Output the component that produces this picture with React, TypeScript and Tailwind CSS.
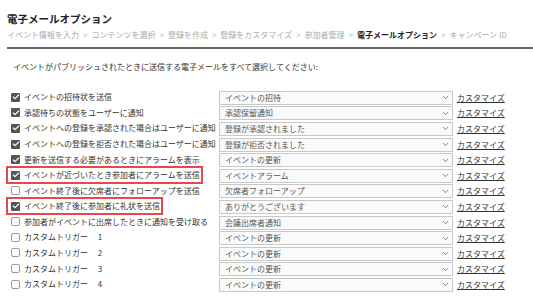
import { ChevronDown, Check } from "lucide-react";

const steps = [
  "イベント情報を入力",
  "コンテンツを選択",
  "登録を作成",
  "登録をカスタマイズ",
  "参加者管理",
  "電子メールオプション",
  "キャンペーン ID",
];

type Row = { label: string; value: string; checked: boolean; mark?: boolean };

const rows: Row[] = [
  { label: "イベントの招待状を送信", value: "イベントの招待", checked: true },
  { label: "承認待ちの状態をユーザーに通知", value: "承認保留通知", checked: true },
  { label: "イベントへの登録を承認された場合はユーザーに通知", value: "登録が承認されました", checked: true },
  { label: "イベントへの登録を拒否された場合はユーザーに通知", value: "登録が拒否されました", checked: true },
  { label: "更新を送信する必要があるときにアラームを表示", value: "イベントの更新", checked: true },
  { label: "イベントが近づいたとき参加者にアラームを送信", value: "イベントアラーム", checked: true, mark: true },
  { label: "イベント終了後に欠席者にフォローアップを送信", value: "欠席者フォローアップ", checked: false },
  { label: "イベント終了後に参加者に礼状を送信", value: "ありがとうございます", checked: true, mark: true },
  { label: "参加者がイベントに出席したときに通知を受け取る", value: "会議出席者通知", checked: false },
  { label: "カスタムトリガー　 1", value: "イベントの更新", checked: false },
  { label: "カスタムトリガー　 2", value: "イベントの更新", checked: false },
  { label: "カスタムトリガー　 3", value: "イベントの更新", checked: false },
  { label: "カスタムトリガー　 4", value: "イベントの更新", checked: false },
];

function Box({ checked }: { checked: boolean }) {
  return checked ? (
    <span className="flex h-[9px] w-[9px] shrink-0 items-center justify-center rounded-[1px] bg-[#555]">
      <Check size={8} strokeWidth={3.5} className="text-white" />
    </span>
  ) : (
    <span className="h-[9px] w-[9px] shrink-0 rounded-[2px] border border-[#999] bg-white" />
  );
}

export default function App() {
  return (
    <div
      className="h-[299px] w-[533px] overflow-hidden bg-white pl-[7px] pt-[11px] text-[#333]"
      style={{ fontFamily: '"Noto Sans CJK JP", "Noto Sans", sans-serif' }}
    >
      <h1 className="text-[10.5px] font-bold leading-[16px] text-[#222]">電子メールオプション</h1>
      <div className="mt-[2px] flex whitespace-nowrap text-[8px] leading-[12px] text-[#aaa]">
        {steps.map((s, i) => (
          <span key={s} className="flex">
            <span className={i === 5 ? "font-bold text-[#222]" : ""}>{s}</span>
            {i < steps.length - 1 && <span className="mx-[4px]">&gt;</span>}
          </span>
        ))}
      </div>
      <div className="mt-[6px] h-[2px] bg-[#666]" />
      <p className="mt-[12px] pl-[6px] text-[8px] leading-[12px] text-[#333]">
        イベントがパブリッシュされたときに送信する電子メールをすべて選択してください:
      </p>
      <div className="mt-[17px]">
        {rows.map((r, i) => (
          <div key={i} className="flex h-[15.6px] items-center text-[8px]">
            <div className="w-[212px] pl-[4px]">
              <span className="relative inline-flex items-center gap-[4px] whitespace-nowrap">
                <Box checked={r.checked} />
                <span className="leading-[12px]">{r.label}</span>
                {r.mark && (
                  <span className="absolute -bottom-[3px] -left-[5px] -right-[3px] -top-[3px] border-2 border-[#e8474c]" />
                )}
              </span>
            </div>
            <div className="flex h-[14px] w-[234px] items-center justify-between border border-[#c8c8c8] bg-[#fafafa] pl-[5px] pr-[2px] text-[#555]">
              <span className="leading-[12px]">{r.value}</span>
              <ChevronDown size={9} strokeWidth={2} className="text-[#555]" />
            </div>
            <a className="ml-[4px] leading-[12px] text-[#333] underline">カスタマイズ</a>
          </div>
        ))}
      </div>
    </div>
  );
}
